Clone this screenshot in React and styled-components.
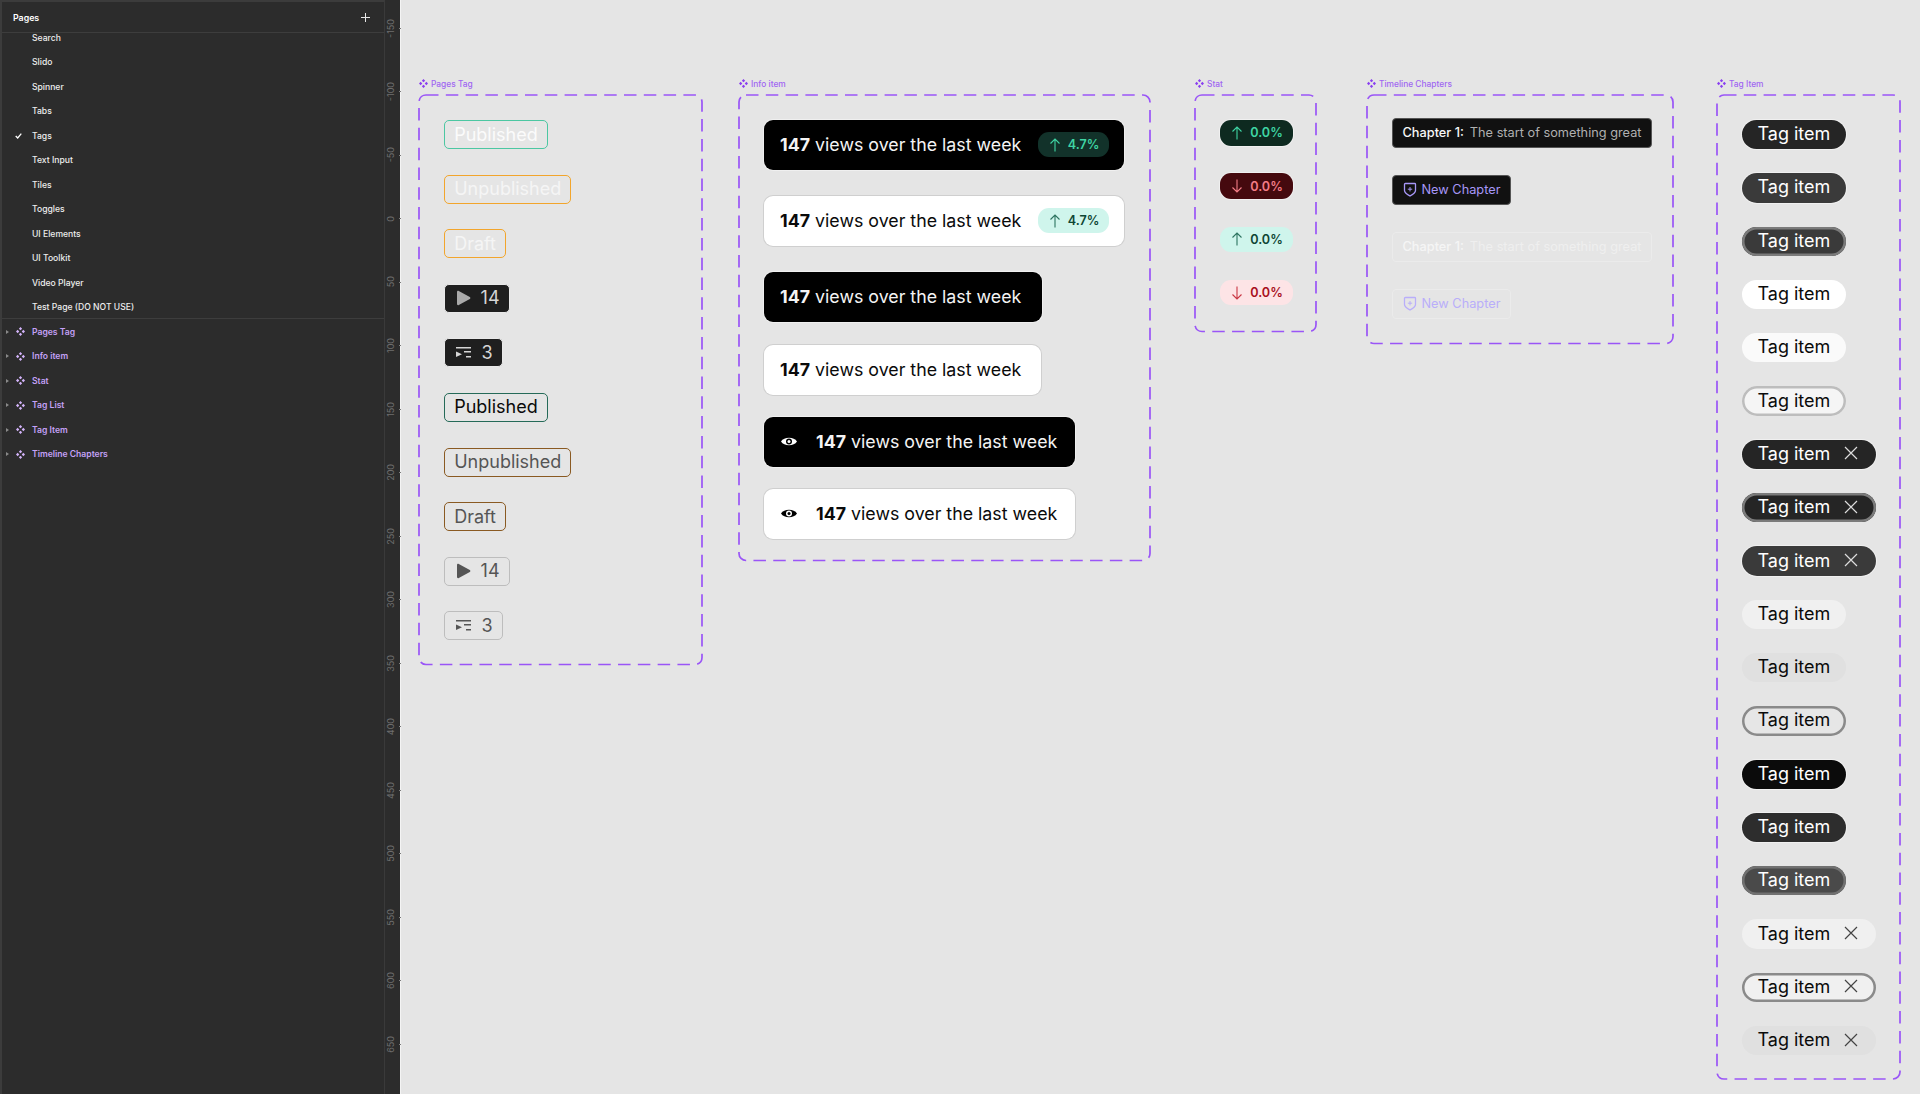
import React from 'react';
import styled, { createGlobalStyle } from 'styled-components';

const GlobalStyle = createGlobalStyle`
  html, body {
    margin: 0;
    height: 100%;
    overflow: hidden;
    background: #e5e5e5;
    font-family: Inter, "Liberation Sans", sans-serif;
  }
`;

const Page = styled.div`
  display: flex;
  width: 1920px;
  height: 1094px;
  overflow: hidden;
`;

/* left panel */

const Sidebar = styled.aside`
  display: flex;
  flex: none;
  width: 401px;
  height: 100%;
  background: #2c2c2c;
  border-right: 1px solid #f4f4f4;
  box-sizing: border-box;
`;

const LayersPanel = styled.div`
  flex: none;
  width: 385px;
  box-sizing: border-box;
  border-left: 2px solid #3c3c3c;
  border-top: 2px solid #3c3c3c;
  border-right: 1px solid #3a3a3a;
  overflow: hidden;
`;

const PanelHeader = styled.div`
  position: relative;
  z-index: 1;
  display: flex;
  align-items: center;
  justify-content: space-between;
  height: 31px;
  padding: 0 13px 0 11px;
  box-sizing: border-box;
  background: #2c2c2c;
  border-bottom: 1px solid #3d3d3d;
  color: #fff;
  font-size: 8.8px;
  font-weight: 600;
`;

const PlusIcon = styled.svg`
  display: block;
  width: 11px;
  height: 11px;
`;

const PageList = styled.div`
  margin-top: -7.75px;
`;

const PageRow = styled.div`
  display: flex;
  align-items: center;
  height: 24.5px;
  padding-left: 30px;
  position: relative;
  color: #eee;
  font-size: 8.6px;
  font-weight: 500;
`;

const CheckIcon = styled.svg`
  position: absolute;
  left: 13px;
  width: 7px;
  height: 6px;
`;

const ComponentList = styled.div`
  border-top: 1px solid #3d3d3d;
  margin-top: -1px;
`;

const ComponentRow = styled.div`
  display: flex;
  align-items: center;
  height: 24.5px;
  padding-left: 4px;
  color: #c4a1f7;
  font-size: 8.6px;
  font-weight: 600;
`;

const Caret = styled.span`
  width: 0;
  height: 0;
  margin-right: 7px;
  border-left: 3px solid #8a8a8a;
  border-top: 2.5px solid transparent;
  border-bottom: 2.5px solid transparent;
`;

const ComponentMark = styled.svg`
  flex: none;
  display: block;
  width: ${props => props.$size || 9}px;
  height: ${props => props.$size || 9}px;
  color: ${props => props.$color || '#d3b3fa'};
`;

const RowName = styled.span`
  margin-left: 7px;
`;

const Ruler = styled.div`
  flex: 1;
  margin-top: -3.75px;
`;

const RulerMark = styled.div`
  display: flex;
  align-items: center;
  justify-content: flex-end;
  height: 63.5px;
  color: #6f6f6f;
  font-size: 9px;
`;

const RulerLabel = styled.span`
  writing-mode: vertical-rl;
  transform: rotate(180deg);
  margin-right: 3px;
`;

const RulerTick = styled.span`
  width: 3px;
  height: 1px;
  background: #7d7d7d;
`;

/* canvas and frames */

const Canvas = styled.main`
  display: flex;
  align-items: flex-start;
  flex: 1;
  padding: 76.5px 0 0 18px;
  background: #e5e5e5;
`;

const Section = styled.section`
  flex: none;
  margin-right: ${props => props.$after}px;
`;

const FrameLabel = styled.div`
  display: flex;
  align-items: center;
  gap: 3px;
  height: 14px;
  margin-bottom: 4px;
  color: #a066f2;
  font-size: 8.4px;
  font-weight: 500;
`;

const Frame = styled.div`
  position: relative;
  display: flex;
  flex-direction: column;
  align-items: flex-start;
  box-sizing: border-box;
  width: ${props => props.$width}px;
  height: ${props => props.$height}px;
  padding: ${props => props.$top || 25.5}px 0 0 ${props => props.$left || 25}px;
  gap: ${props => props.$gap}px;
`;

const DashLine = styled.svg`
  position: absolute;
  top: 0;
  left: 0;
  width: 100%;
  height: 100%;
  overflow: visible;
  pointer-events: none;
`;

const PageTag = styled.div`
  display: flex;
  align-items: center;
  gap: ${props => (props.$hasIcon ? 9.4 : 0)}px;
  box-sizing: border-box;
  height: 29px;
  padding: 0 9.2px;
  border: 1.9px solid ${props => props.$line};
  border-radius: 5px;
  background: ${props => props.$bg || 'transparent'};
  color: ${props => props.$color};
  font-size: 18px;
  line-height: 1;
`;

const PlayIcon = styled.svg`
  display: block;
  width: 15px;
  height: 16px;
  margin-left: 2px;
  fill: currentColor;
`;

const QueueIcon = styled.svg`
  display: block;
  width: 16px;
  height: 12px;
  margin-left: 2px;
  fill: currentColor;
`;

const InfoRow = styled.div`
  display: flex;
  align-items: center;
  box-sizing: border-box;
  width: ${props => props.$width}px;
  height: 50px;
  margin-top: ${props => props.$top || 0}px;
  padding: 0 15px 1px 16px;
  border-radius: 9px;
  background: ${props => (props.$dark ? '#000' : '#fff')};
  box-shadow: 0 0 0 1px ${props => (props.$dark ? '#f0f0f0' : '#cfcfcf')};
  color: ${props => (props.$dark ? '#f4f4f4' : '#0a0a0a')};
  font-size: 17.8px;
  white-space: nowrap;
`;

const InfoCount = styled.strong`
  font-weight: 700;
  margin-right: 5px;
`;

const EyeIcon = styled.svg`
  display: block;
  flex: none;
  width: 16px;
  height: 11px;
  margin: 0 19px 0 1px;
`;

const Trend = styled.span`
  display: flex;
  align-items: center;
  justify-content: center;
  gap: 7px;
  box-sizing: border-box;
  width: ${props => (props.$wide ? 71 : 73)}px;
  height: ${props => (props.$wide ? 25 : 25.5)}px;
  margin-left: ${props => (props.$wide ? 'auto' : 0)};
  padding-left: 1px;
  border-radius: 11px;
  background: ${props => props.$bg};
  box-shadow: ${props => (props.$halo ? '0 0 0 1px #f0f0f0' : 'none')};
  color: ${props => props.$color};
  font-size: 12.6px;
  font-weight: 600;
`;

const ArrowIcon = styled.svg`
  display: block;
  flex: none;
  width: 12px;
  height: 14px;
  color: ${props => props.$color};
`;

const Chapter = styled.div`
  display: flex;
  align-items: center;
  box-sizing: border-box;
  height: 29.5px;
  padding: 0 10px;
  border-radius: 4px;
  border: 1px solid ${props => props.$line};
  background: ${props => props.$bg};
  color: ${props => props.$color};
  font-size: 12.75px;
  white-space: nowrap;
`;

const ChapterName = styled.span`
  font-weight: 500;
  color: ${props => props.$color};
  margin-right: 6px;
`;

const ShieldIcon = styled.svg`
  display: block;
  width: 14px;
  height: 15px;
  margin-right: 5px;
`;

const TagItem = styled.div`
  display: flex;
  align-items: center;
  box-sizing: border-box;
  height: 29.3px;
  padding: 0 16px 2px 15.5px;
  border-radius: 15px;
  background: ${props => props.$bg};
  color: ${props => props.$color};
  font-size: 18px;
  box-shadow: ${props => {
    if (props.$ring) return `inset 0 0 0 2.5px ${props.$ring}`;
    return props.$halo ? '0 0 0 1px #f0f0f0' : 'none';
  }};
`;

const CloseIcon = styled.svg`
  display: block;
  width: 14px;
  height: 14px;
  margin: 0 2px 0 14px;
`;

const pageNames = ['Search', 'Slido', 'Spinner', 'Tabs', 'Tags', 'Text Input', 'Tiles', 'Toggles', 'UI Elements', 'UI Toolkit', 'Video Player', 'Test Page (DO NOT USE)'];
const componentNames = ['Pages Tag', 'Info item', 'Stat', 'Tag List', 'Tag Item', 'Timeline Chapters'];
const rulerMarks = [-150, -100, -50, 0, 50, 100, 150, 200, 250, 300, 350, 400, 450, 500, 550, 600, 650];

const statusTags = [
  { text: 'Published', line: '#4cc7a2', color: '#fbfbfb' },
  { text: 'Unpublished', line: '#f2a52c', color: '#f5f5f5' },
  { text: 'Draft', line: '#f2a52c', color: '#f5f5f5' },
  { text: '14', icon: 'play', line: '#e9e9e9', bg: '#1f1f1f', color: '#d6d6d6', iconColor: '#aaa' },
  { text: '3', icon: 'queue', line: '#e9e9e9', bg: '#1f1f1f', color: '#d6d6d6', iconColor: '#d6d6d6' },
  { text: 'Published', line: '#256a58', color: '#0a0a0a' },
  { text: 'Unpublished', line: '#8a5a22', color: '#555' },
  { text: 'Draft', line: '#8a5a22', color: '#555' },
  { text: '14', icon: 'play', line: '#bdbdbd', color: '#555' },
  { text: '3', icon: 'queue', line: '#bdbdbd', color: '#555' },
];

const infoRows = [
  { dark: true, width: 360, trend: true },
  { width: 360, trend: true, top: 0 },
  { dark: true, width: 278 },
  { width: 277, top: -3.5 },
  { dark: true, width: 311, eye: true, top: -3.5 },
  { width: 311, eye: true, top: -4.5 },
];

const stats = [
  { up: true, bg: '#0e2a20', color: '#3fd5a4', arrow: '#3fd5a4', halo: true },
  { bg: '#45090e', color: '#f37c86', arrow: '#f37c86', halo: true },
  { up: true, bg: '#cff5ec', color: '#0e4534', arrow: '#2d7360' },
  { bg: '#fde4e6', color: '#a80f1d', arrow: '#c93744' },
];

const tagItems = [
  { bg: '#252525', color: '#fff', halo: true },
  { bg: '#3a3a3a', color: '#fff', halo: true },
  { bg: '#3a3a3a', color: '#fff', ring: '#7b7b7b' },
  { bg: '#fff', color: '#0a0a0a' },
  { bg: '#fafafa', color: '#0a0a0a' },
  { bg: '#f5f5f5', color: '#0a0a0a', ring: '#bdbdbd' },
  { bg: '#252525', color: '#fff', close: '#ddd', halo: true },
  { bg: '#252525', color: '#fff', ring: '#7b7b7b', close: '#ddd' },
  { bg: '#3a3a3a', color: '#fff', close: '#ddd', halo: true },
  { bg: '#f0f0f0', color: '#0a0a0a' },
  { bg: '#e0e0e0', color: '#0a0a0a' },
  { bg: '#e6e6e6', color: '#0a0a0a', ring: '#8a8a8a' },
  { bg: '#0b0b0b', color: '#fff', halo: true },
  { bg: '#2d2d2d', color: '#fff', halo: true },
  { bg: '#4a4a4a', color: '#fff', ring: '#717171' },
  { bg: '#f0f0f0', color: '#0a0a0a', close: '#444' },
  { bg: '#f0f0f0', color: '#0a0a0a', ring: '#8a8a8a', close: '#444' },
  { bg: '#e0e0e0', color: '#0a0a0a', close: '#444' },
];

const Mark = ({ size, color }) => (
  <ComponentMark viewBox="0 0 12 12" $size={size} $color={color} fill="currentColor">
    <path d="M6 0l2.200 2.200L6 4.400 3.800 2.200zM6 7.600l2.200 2.200L6 12 3.800 9.800zM2.200 3.800l2.200 2.200-2.200 2.200L0 6zM9.800 3.800L12 6 9.800 8.200 7.600 6z" />
  </ComponentMark>
);

const Arrow = ({ up, color }) => (
  <ArrowIcon viewBox="0 0 12 14" $color={color} fill="none" stroke="currentColor" strokeWidth="1.1">
    {up
      ? <path d="M6 13.500V1M1.500 5.500L6 1l4.500 4.500" />
      : <path d="M6 .5V13M1.500 8.500L6 13l4.500-4.500" />}
  </ArrowIcon>
);

const Close = ({ color }) => (
  <CloseIcon viewBox="0 0 14 14" fill="none" stroke={color} strokeWidth="1.2">
    <path d="M1 1l12 12M13 1L1 13" />
  </CloseIcon>
);

const Shield = ({ color }) => (
  <ShieldIcon viewBox="0 0 14 15" fill="none" stroke={color} strokeWidth="1.3">
    <path d="M2.300 1.500h9.400c.5 0 .8.3.8.8v6.200c0 2.600-2.600 3.900-5.500 5.400-2.900-1.500-5.500-2.800-5.500-5.400V2.300c0-.5.3-.8.8-.8z" />
    <path d="M7 5v4.400M4.800 7.200h4.400" strokeWidth="1" />
  </ShieldIcon>
);

const FrameOutline = () => (
  <DashLine>
    <rect width="100%" height="100%" rx="7" fill="none" stroke="#9a55f7" strokeWidth="1.7" strokeDasharray="12.5 7.3" />
  </DashLine>
);

const CanvasFrame = ({ label, after, width, height, gap, top, left, children }) => (
  <Section $after={after}>
    <FrameLabel>
      <Mark color="#8a3ff0" />
      {label}
    </FrameLabel>
    <Frame $width={width} $height={height} $gap={gap} $top={top} $left={left}>
      <FrameOutline />
      {children}
    </Frame>
  </Section>
);

const Views = () => (
  <span>
    <InfoCount>147</InfoCount>views over the last week
  </span>
);

export default function App() {
  return (
    <Page>
      <GlobalStyle />
      <Sidebar>
        <LayersPanel>
          <PanelHeader>
            Pages
            <PlusIcon viewBox="0 0 11 11" stroke="#e8e8e8" strokeWidth="1">
              <path d="M5.500 1v9M1 5.500h9" />
            </PlusIcon>
          </PanelHeader>
          <PageList>
            {pageNames.map(name => (
              <PageRow key={name}>
                {name === 'Tags' && (
                  <CheckIcon viewBox="0 0 7 6" fill="none" stroke="#fff" strokeWidth="1.3">
                    <path d="M.7 3l2 2L6.300.7" />
                  </CheckIcon>
                )}
                {name}
              </PageRow>
            ))}
          </PageList>
          <ComponentList>
            {componentNames.map(name => (
              <ComponentRow key={name}>
                <Caret />
                <Mark />
                <RowName>{name}</RowName>
              </ComponentRow>
            ))}
          </ComponentList>
        </LayersPanel>
        <Ruler>
          {rulerMarks.map(value => (
            <RulerMark key={value}>
              <RulerLabel>{value}</RulerLabel>
              <RulerTick />
            </RulerMark>
          ))}
        </Ruler>
      </Sidebar>

      <Canvas>
        <CanvasFrame label="Pages Tag" after={37} width={283} height={569.5} gap={25.6}>
          {statusTags.map((tag, i) => (
            <PageTag key={i} $line={tag.line} $bg={tag.bg} $color={tag.color} $hasIcon={Boolean(tag.icon)}>
              {tag.icon === 'play' && (
                <PlayIcon viewBox="0 0 15 16" color={tag.iconColor}>
                  <path d="M1 2c0-1 .9-1.500 1.800-1l11 6c.8.5.8 1.500 0 2l-11 6C1.900 15.500 1 15 1 14z" />
                </PlayIcon>
              )}
              {tag.icon === 'queue' && (
                <QueueIcon viewBox="0 0 16 12" color={tag.iconColor}>
                  <path d="M0 0h15v1.500H0zM0 4.500l6 2.750L0 10zM8 4h7v1.500H8zM10 9h5v1.500h-5z" />
                </QueueIcon>
              )}
              {tag.text}
            </PageTag>
          ))}
        </CanvasFrame>

        <CanvasFrame label="Info item" after={45} width={411} height={465.5} gap={26}>
          {infoRows.map((row, i) => (
            <InfoRow key={i} $dark={row.dark} $width={row.width} $top={row.top}>
              {row.eye && (
                <EyeIcon viewBox="0 0 16 11">
                  <path d="M0 5.500C3 .5 13 .5 16 5.500 13 10.500 3 10.500 0 5.500z" fill={row.dark ? '#fff' : '#000'} />
                  <circle cx="8" cy="5.500" r="3" fill={row.dark ? '#000' : '#fff'} />
                  <circle cx="8" cy="5.500" r="1.500" fill={row.dark ? '#fff' : '#000'} />
                </EyeIcon>
              )}
              <Views />
              {row.trend && (
                <Trend $wide $bg={row.dark ? '#12322a' : '#cff5ec'} $color={row.dark ? '#3fd5a4' : '#0e4534'}>
                  <Arrow up color={row.dark ? '#3fd5a4' : '#2d7360'} />
                  4.7%
                </Trend>
              )}
            </InfoRow>
          ))}
        </CanvasFrame>

        <CanvasFrame label="Stat" after={51} width={121} height={236.5} gap={27.8}>
          {stats.map((stat, i) => (
            <Trend key={i} $bg={stat.bg} $color={stat.color} $halo={stat.halo}>
              <Arrow up={stat.up} color={stat.arrow} />
              0.0%
            </Trend>
          ))}
        </CanvasFrame>

        <CanvasFrame label="Timeline Chapters" after={44} width={306} height={248.5} gap={27.5} top={23.5} left={24.5}>
          <Chapter $bg="#111" $line="#555" $color="#b0b0b0">
            <ChapterName $color="#f7f7f7">Chapter 1:</ChapterName>
            The start of something great
          </Chapter>
          <Chapter $bg="#111" $line="#555" $color="#a797f7">
            <Shield color="#a797f7" />
            New Chapter
          </Chapter>
          <Chapter $bg="transparent" $line="#ebebeb" $color="#efefef">
            <ChapterName $color="#f5f5f5">Chapter 1:</ChapterName>
            The start of something great
          </Chapter>
          <Chapter $bg="transparent" $line="#ebebeb" $color="#b9aefa">
            <Shield color="#b9aefa" />
            New Chapter
          </Chapter>
        </CanvasFrame>

        <CanvasFrame label="Tag Item" after={0} width={183} height={984} gap={24}>
          {tagItems.map((tag, i) => (
            <TagItem key={i} $bg={tag.bg} $color={tag.color} $ring={tag.ring} $halo={tag.halo}>
              Tag item
              {tag.close && <Close color={tag.close} />}
            </TagItem>
          ))}
        </CanvasFrame>
      </Canvas>
    </Page>
  );
}
